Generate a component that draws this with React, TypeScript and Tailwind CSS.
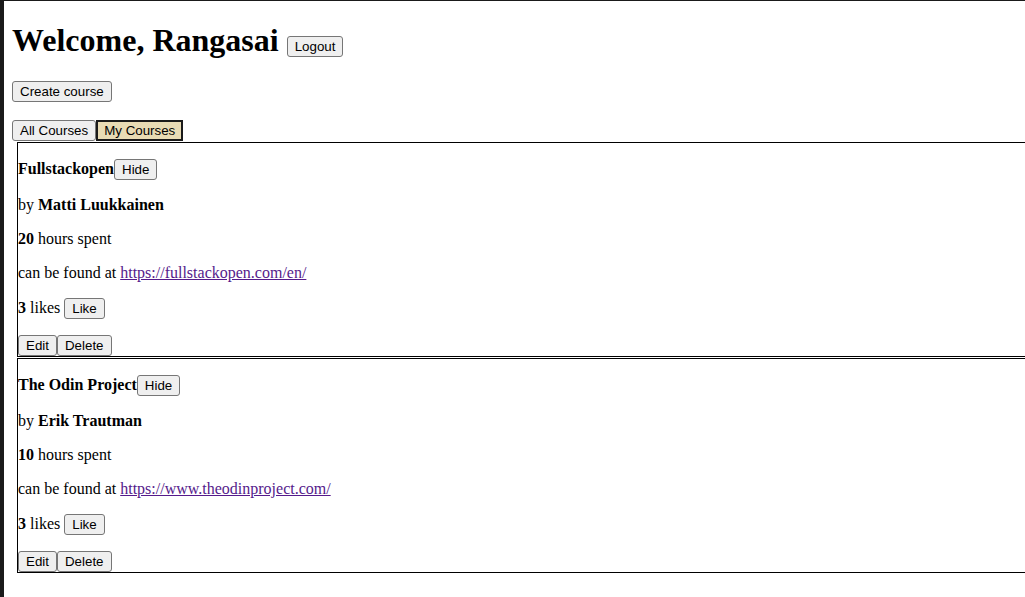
import React from "react";

const btn =
  "inline-block align-baseline bg-[#efefef] border border-[#767676] rounded-[3px] px-[7px] py-[2px] text-[13.333px] leading-[normal] font-['Liberation_Sans',Arial,sans-serif] text-black cursor-default";

const selBtn =
  "inline-block align-baseline bg-[#e8dbb4] border-2 border-[#1a1a1a] px-[6px] py-[1px] text-[13.333px] leading-[normal] font-['Liberation_Sans',Arial,sans-serif] text-black cursor-default";

type Course = {
  title: string;
  author: string;
  hours: number;
  url: string;
  likes: number;
};

const courses: Course[] = [
  {
    title: "Fullstackopen",
    author: "Matti Luukkainen",
    hours: 20,
    url: "https://fullstackopen.com/en/",
    likes: 3,
  },
  {
    title: "The Odin Project",
    author: "Erik Trautman",
    hours: 10,
    url: "https://www.theodinproject.com/",
    likes: 3,
  },
];

function CourseCard({ c }: { c: Course }) {
  return (
    <div className="ml-[5px] mb-px w-[1060px] border border-black">
      <p className="my-4">
        <b>{c.title}</b>
        <button className={btn}>Hide</button>
      </p>
      <p className="my-4">
        by <b>{c.author}</b>
      </p>
      <p className="my-4">
        <b>{c.hours}</b> hours spent
      </p>
      <p className="my-4">
        can be found at{" "}
        <a href="#" className="underline text-[#551a8b]">
          {c.url}
        </a>
      </p>
      <p className="my-4">
        <b>{c.likes}</b> likes <button className={btn}>Like</button>
      </p>
      <div>
        <button className={btn}>Edit</button>
        <button className={btn}>Delete</button>
      </div>
    </div>
  );
}

export default function App() {
  return (
    <div className="h-[597px] overflow-hidden bg-white border-l-4 border-t border-[#1a1a1a] font-['Liberation_Serif','Times_New_Roman',serif] text-[16px] leading-[normal] text-black">
      <div className="mx-2">
        <h1 className="mt-[21.44px] mb-[21.44px] text-[32px] font-bold leading-[normal]">
          Welcome, Rangasai <button className={btn + " font-normal"}>Logout</button>
        </h1>
        <div>
          <button className={btn}>Create course</button>
        </div>
        <div className="mt-[18.4px] mb-px">
          <button className={btn}>All Courses</button>
          <button className={selBtn}>My Courses</button>
        </div>
        {courses.map((c) => (
          <CourseCard key={c.title} c={c} />
        ))}
      </div>
    </div>
  );
}
